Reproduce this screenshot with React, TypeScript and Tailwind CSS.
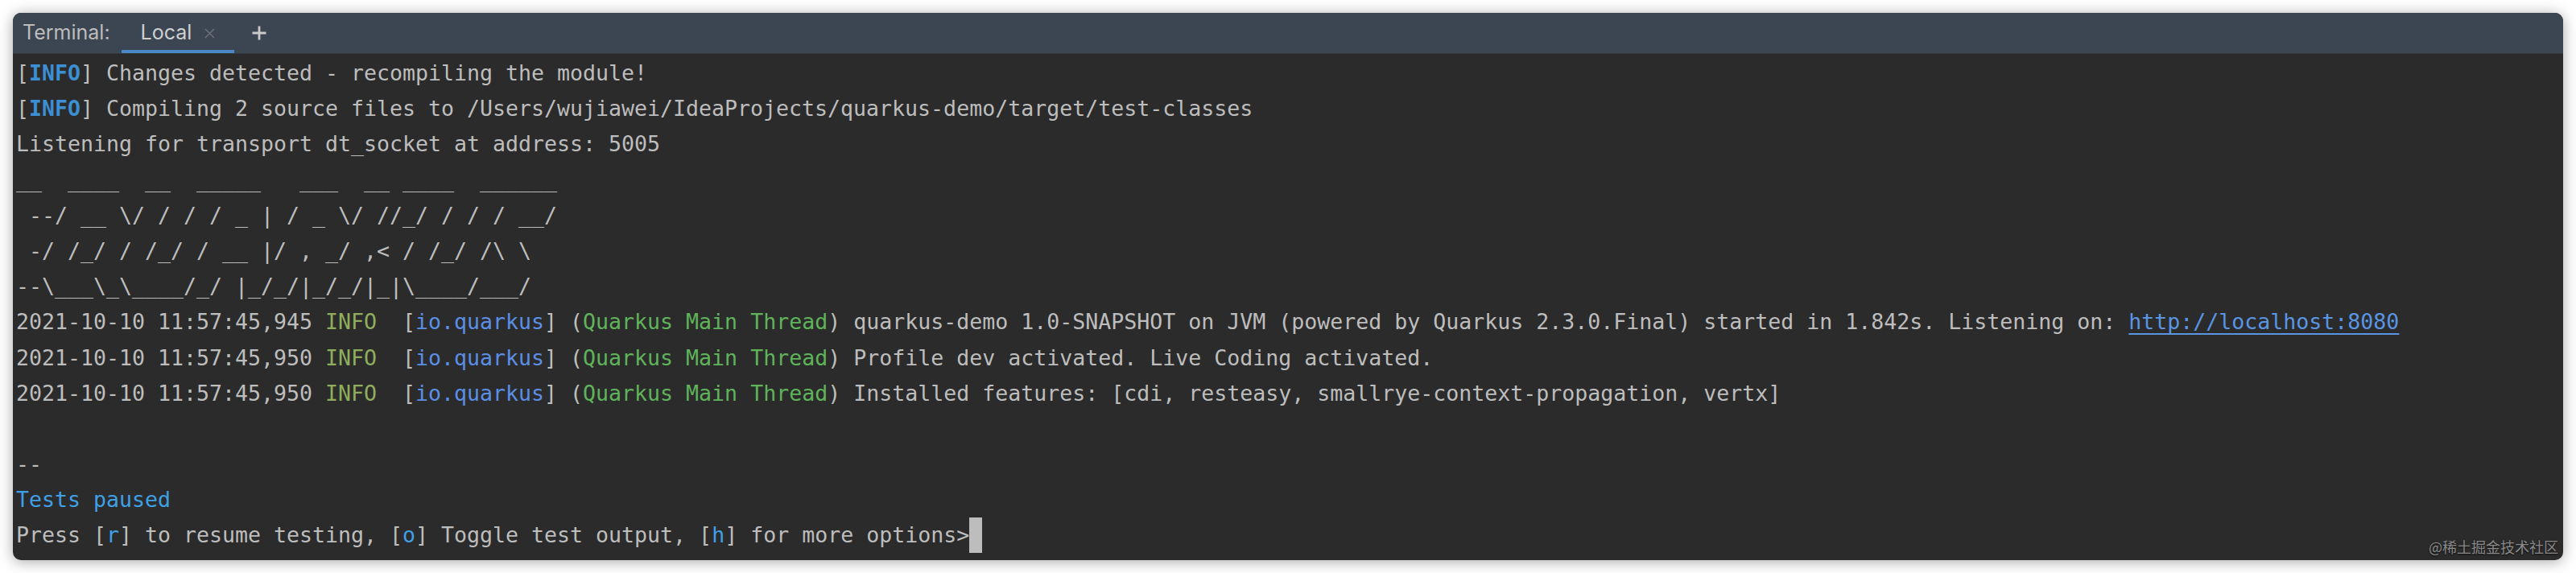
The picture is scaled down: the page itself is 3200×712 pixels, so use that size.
import React from "react";

const BLUE = "text-[#3b8fd2]";

function Line({ children }: { children?: React.ReactNode }) {
  return <div className="h-[44.2px] whitespace-pre leading-[44.2px]">{children ?? " "}</div>;
}

function LogLine({ time, rest }: { time: string; rest: React.ReactNode }) {
  return (
    <Line>
      {time + " "}
      <span className="text-[#8fae5d]">INFO</span>
      {"  ["}
      <span className="text-[#5b8fe6]">io.quarkus</span>
      {"] ("}
      <span className="text-[#5fb35a]">Quarkus Main Thread</span>
      {") "}
      {rest}
    </Line>
  );
}

export default function App() {
  return (
    <div className="h-[712px] w-[3200px] bg-white p-4">
      <div className="relative flex h-full flex-col overflow-hidden rounded-[10px] bg-[#2b2b2b] shadow-[0_2px_18px_rgba(0,0,0,0.35)]">
        {/* header */}
        <div className="box-content flex h-[50px] shrink-0 items-stretch border-b border-[#34393f] bg-[#3c4552] pl-[12px] font-['Inter',sans-serif] text-[25px]">
          <div className="flex items-center text-[#bcbcbc]">Terminal:</div>
          <div className="ml-[14px] flex items-center border-b-[4px] border-t-[4px] border-b-[#4a88c7] border-t-transparent pl-[24px] pr-[23px] text-[#d0d0d0]">
            Local
            <svg className="ml-[15px]" width="15" height="15" viewBox="0 0 15 15">
              <path d="M2 2 L13 13 M13 2 L2 13" stroke="#6f747b" strokeWidth="1.4" />
            </svg>
          </div>
          <div className="ml-[21px] flex items-center">
            <svg width="20" height="20" viewBox="0 0 20 20">
              <path d="M10 1.5 V18.5 M1.5 10 H18.5" stroke="#c9c9c9" strokeWidth="2.8" />
            </svg>
          </div>
        </div>

        {/* body */}
        <div className="flex-1 pl-[4px] pt-[2px] font-['DejaVu_Sans_Mono','Liberation_Mono',monospace] text-[26.58px] text-[#bdbdbd]">
          <Line>
            [<span className={`font-bold ${BLUE}`}>INFO</span>] Changes detected - recompiling the module!
          </Line>
          <Line>
            [<span className={`font-bold ${BLUE}`}>INFO</span>] Compiling 2 source files to /Users/wujiawei/IdeaProjects/quarkus-demo/target/test-classes
          </Line>
          <Line>Listening for transport dt_socket at address: 5005</Line>
          <Line>{"__  ____  __  _____   ___  __ ____  ______ "}</Line>
          <Line>{" --/ __ \\/ / / / _ | / _ \\/ //_/ / / / __/ "}</Line>
          <Line>{" -/ /_/ / /_/ / __ |/ , _/ ,< / /_/ /\\ \\   "}</Line>
          <Line>{"--\\___\\_\\____/_/ |_/_/|_/_/|_|\\____/___/   "}</Line>
          <LogLine
            time="2021-10-10 11:57:45,945"
            rest={
              <>
                {"quarkus-demo 1.0-SNAPSHOT on JVM (powered by Quarkus 2.3.0.Final) started in 1.842s. Listening on: "}
                <span className="text-[#5a95e2] underline decoration-[2px] underline-offset-[5px]">http://localhost:8080</span>
              </>
            }
          />
          <LogLine time="2021-10-10 11:57:45,950" rest="Profile dev activated. Live Coding activated." />
          <LogLine
            time="2021-10-10 11:57:45,950"
            rest="Installed features: [cdi, resteasy, smallrye-context-propagation, vertx]"
          />
          <Line />
          <Line>--</Line>
          <Line>
            <span className="text-[#3fa0e6]">Tests paused</span>
          </Line>
          <Line>
            {"Press ["}
            <span className="text-[#3fa0e6]">r</span>
            {"] to resume testing, ["}
            <span className="text-[#3fa0e6]">o</span>
            {"] Toggle test output, ["}
            <span className="text-[#3fa0e6]">h</span>
            {"] for more options>"}
            <span className="inline-block h-[44px] w-[16px] bg-[#bdbdbd] align-top" />
          </Line>
        </div>

        {/* watermark */}
        <div className="absolute bottom-[6px] right-[6px] font-['Noto_Sans_CJK_SC',sans-serif] text-[18px] leading-[22px] text-[#8a8a8a] [text-shadow:0_1px_2px_rgba(0,0,0,0.7)]">
          @稀土掘金技术社区
        </div>
      </div>
    </div>
  );
}
